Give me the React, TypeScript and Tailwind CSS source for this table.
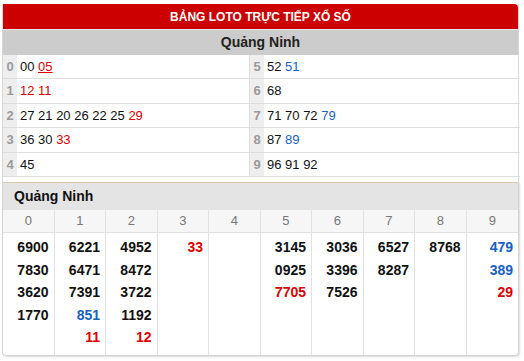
import React from 'react';

type Num = { v: string; c?: 'red' | 'blue'; u?: boolean };

const RED = 'text-[#e00000]';
const BLUE = 'text-[#1660c8]';

const loto: { d: string; nums: Num[] }[] = [
  { d: '0', nums: [{ v: '00' }, { v: '05', c: 'red', u: true }] },
  { d: '1', nums: [{ v: '12', c: 'red' }, { v: '11', c: 'red' }] },
  { d: '2', nums: ['27', '21', '20', '26', '22', '25'].map((v) => ({ v })).concat([{ v: '29', c: 'red' } as Num]) },
  { d: '3', nums: [{ v: '36' }, { v: '30' }, { v: '33', c: 'red' }] },
  { d: '4', nums: [{ v: '45' }] },
  { d: '5', nums: [{ v: '52' }, { v: '51', c: 'blue' }] },
  { d: '6', nums: [{ v: '68' }] },
  { d: '7', nums: [{ v: '71' }, { v: '70' }, { v: '72' }, { v: '79', c: 'blue' }] },
  { d: '8', nums: [{ v: '87' }, { v: '89', c: 'blue' }] },
  { d: '9', nums: [{ v: '96' }, { v: '91' }, { v: '92' }] },
];

const prizes: Num[][] = [
  [{ v: '6900' }, { v: '7830' }, { v: '3620' }, { v: '1770' }],
  [{ v: '6221' }, { v: '6471' }, { v: '7391' }, { v: '851', c: 'blue' }, { v: '11', c: 'red' }],
  [{ v: '4952' }, { v: '8472' }, { v: '3722' }, { v: '1192' }, { v: '12', c: 'red' }],
  [{ v: '33', c: 'red' }],
  [],
  [{ v: '3145' }, { v: '0925' }, { v: '7705', c: 'red' }],
  [{ v: '3036' }, { v: '3396' }, { v: '7526' }],
  [{ v: '6527' }, { v: '8287' }],
  [{ v: '8768' }],
  [{ v: '479', c: 'blue' }, { v: '389', c: 'blue' }, { v: '29', c: 'red' }],
];

function colorOf(n: Num) {
  if (n.c === 'red') return RED;
  if (n.c === 'blue') return BLUE;
  return 'text-[#111]';
}

function LotoCell({ d, nums, wide }: { d: string; nums: Num[]; wide?: boolean }) {
  return (
    <div className={`flex h-[24.4px] border-b border-[#dedede] ${wide ? 'w-[270px]' : 'w-[247px] border-r border-[#dedede]'}`}>
      <div className="w-[14px] shrink-0 bg-[#eeeeee] text-[#9a9a9a] font-bold text-[13px] flex items-center justify-center">
        {d}
      </div>
      <div className="flex items-center gap-[3.6px] pl-[3px] text-[13px]">
        {nums.map((n, i) => (
          <span key={i} className={`${colorOf(n)} ${n.u ? 'underline' : ''}`}>
            {n.v}
          </span>
        ))}
      </div>
    </div>
  );
}

export default function App() {
  const left = loto.slice(0, 5);
  const right = loto.slice(5);

  return (
    <div className="w-[524px] h-[361px] bg-white pt-[4px] px-[2px] font-['Liberation_Sans',Arial,sans-serif]">
      {/* Bảng loto */}
      <div className="w-[517px] border-x border-[#d8d8d8] pb-[5px]">
        <div className="h-[25px] bg-[#cc0000] rounded-tr-[4px] flex items-center justify-center text-white font-bold text-[12px]">
          BẢNG LOTO TRỰC TIẾP XỔ SỐ
        </div>
        <div className="h-[26px] bg-[#cccccc] border-t border-[#e6e6e6] flex items-center justify-center font-bold text-[14px] text-[#222]">
          Quảng Ninh
        </div>
        <div className="flex">
          <div className="flex flex-col">
            {left.map((r) => (
              <LotoCell key={r.d} d={r.d} nums={r.nums} />
            ))}
          </div>
          <div className="flex flex-col">
            {right.map((r) => (
              <LotoCell key={r.d} d={r.d} nums={r.nums} wide />
            ))}
          </div>
        </div>
      </div>

      {/* Kết quả theo đầu */}
      <div className="w-[517px] border border-[#d4d4d4] border-t-[#d8c8ae] rounded-b-[4px] shadow-[1px_1px_2px_rgba(0,0,0,0.15)] overflow-hidden">
        <div className="h-[27px] bg-[#e4e4e4] flex items-center pl-[11px] font-bold text-[14px] text-[#111]">
          Quảng Ninh
        </div>
        <div className="grid grid-cols-10 h-[23px] bg-[#f6f6f6] border-b border-[#e2e2e2]">
          {prizes.map((_, i) => (
            <div
              key={i}
              className={`flex items-center justify-center text-[13px] text-[#777] ${i < 9 ? 'border-r border-[#e2e2e2]' : ''}`}
            >
              {i}
            </div>
          ))}
        </div>
        <div className="grid grid-cols-10 h-[122px]">
          {prizes.map((col, i) => (
            <div
              key={i}
              className={`flex flex-col items-end pr-[5px] pt-[3px] font-bold text-[14px] leading-[22.6px] ${i < 9 ? 'border-r border-[#e2e2e2]' : ''}`}
            >
              {col.map((n, j) => (
                <span key={j} className={colorOf(n)}>
                  {n.v}
                </span>
              ))}
            </div>
          ))}
        </div>
      </div>
    </div>
  );
}
